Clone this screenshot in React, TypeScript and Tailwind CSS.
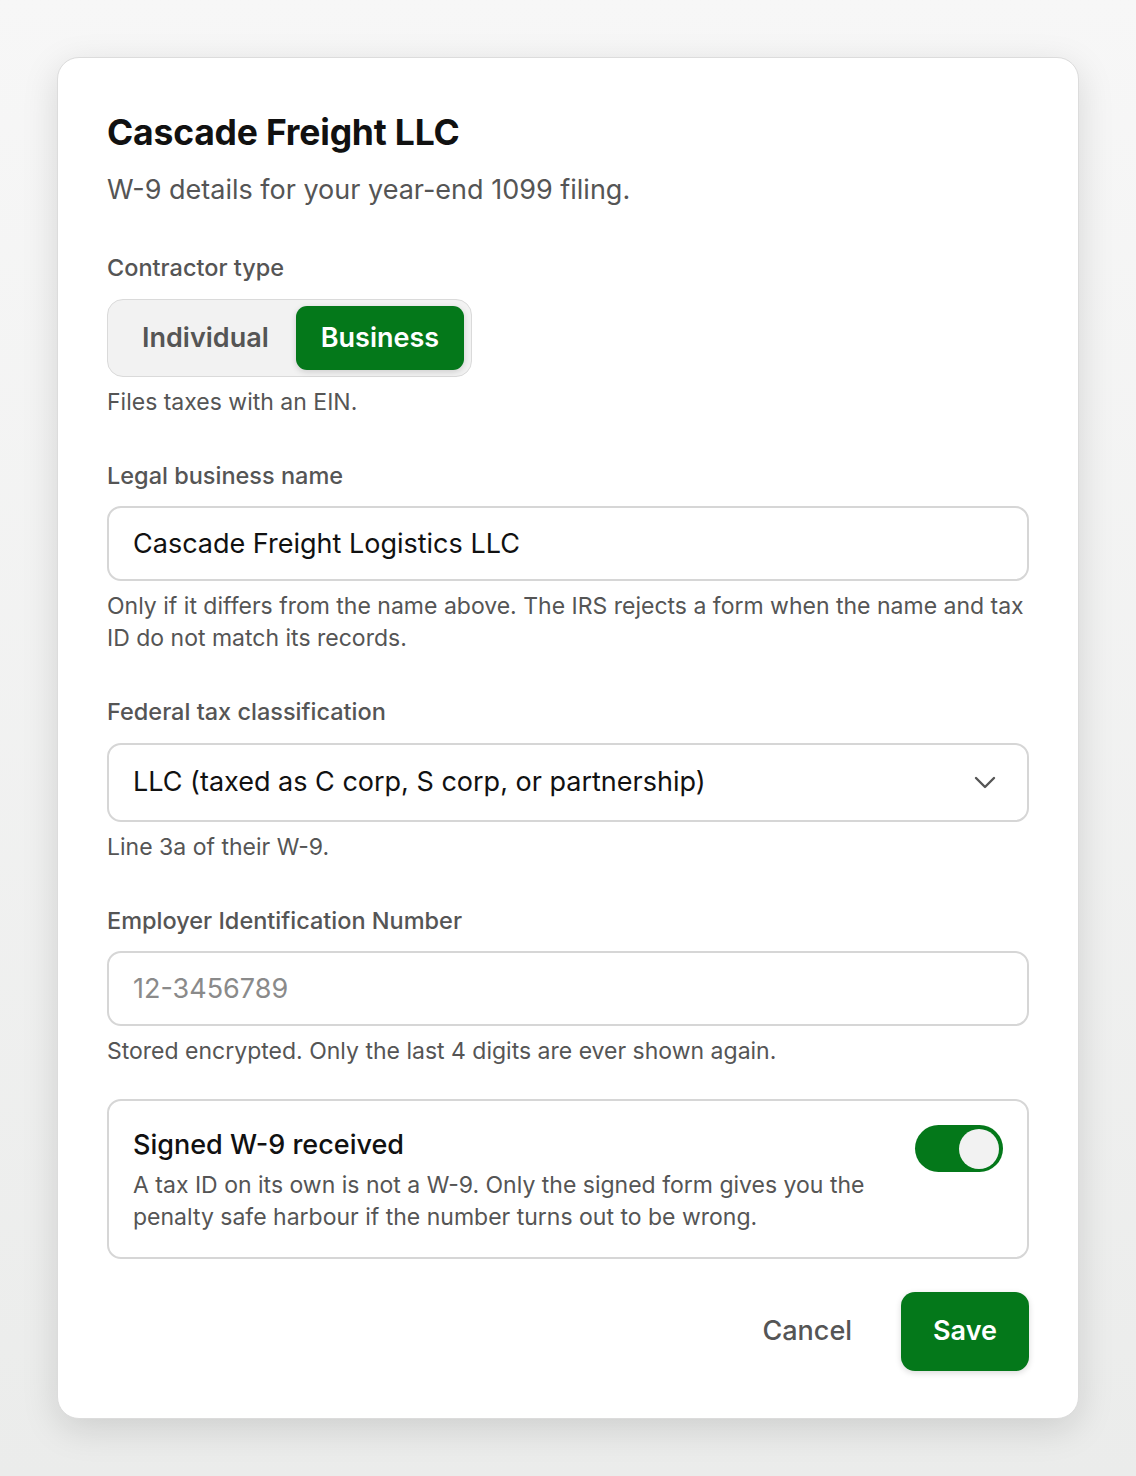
import React, { useState } from 'react';

const font = { fontFamily: 'Inter, "Noto Sans", sans-serif' };

const App: React.FC = () => {
  const [type, setType] = useState<'individual' | 'business'>('business');
  const [received, setReceived] = useState(true);

  return (
    <div
      className="min-h-[1476px] w-full bg-gradient-to-b from-[#f7f7f7] to-[#ebeceb] px-[57px] pt-[57px] pb-[58px]"
      style={font}
    >
      <div className="rounded-[22px] border border-[#dcdcdc] bg-white px-[49px] pt-[53px] pb-[47px] shadow-[0_10px_36px_rgba(0,0,0,0.13)]">
        {/* Header */}
        <h1 className="text-[35.5px] leading-[44px] font-bold tracking-[-0.2px] text-[#111]">
          Cascade Freight LLC
        </h1>
        <p className="mt-[18px] text-[27px] leading-[34px] text-[#555]">
          W-9 details for your year-end 1099 filing.
        </p>

        {/* Contractor type */}
        <label className="mt-[46px] block text-[23.5px] leading-[30px] font-medium text-[#555]">
          Contractor type
        </label>
        <div className="mt-[16px] inline-flex rounded-[16px] border border-[#dadada] bg-[#f2f2f2] px-[7px] py-[6px]">
          <button
            onClick={() => setType('individual')}
            className={`h-[64px] rounded-[11px] px-[27px] text-[27px] font-semibold ${
              type === 'individual' ? 'bg-[#04781a] text-white shadow-[0_2px_6px_rgba(0,0,0,0.15)]' : 'text-[#555]'
            }`}
          >
            Individual
          </button>
          <button
            onClick={() => setType('business')}
            className={`h-[64px] rounded-[11px] px-[25px] text-[27px] font-semibold ${
              type === 'business' ? 'bg-[#04781a] text-white shadow-[0_2px_6px_rgba(0,0,0,0.15)]' : 'text-[#555]'
            }`}
          >
            Business
          </button>
        </div>
        <p className="mt-[10px] text-[23px] leading-[30px] text-[#555]">Files taxes with an EIN.</p>

        {/* Legal business name */}
        <label className="mt-[44px] block text-[23.5px] leading-[30px] font-medium text-[#555]">
          Legal business name
        </label>
        <input
          defaultValue="Cascade Freight Logistics LLC"
          className="mt-[15px] block h-[75px] w-full rounded-[14px] border-2 border-[#d6d6d6] bg-white px-[24px] text-[27px] text-[#111] outline-none"
        />
        <p className="mt-[9px] text-[23px] leading-[32px] text-[#555]">
          Only if it differs from the name above. The IRS rejects a form when the name and tax ID do not match its
          records.
        </p>

        {/* Federal tax classification */}
        <label className="mt-[43px] block text-[23.5px] leading-[30px] font-medium text-[#555]">
          Federal tax classification
        </label>
        <div className="mt-[16px] flex h-[79px] w-full items-center justify-between rounded-[14px] border-2 border-[#d6d6d6] bg-white pl-[24px] pr-[31px]">
          <span className="text-[27px] text-[#111]">LLC (taxed as C corp, S corp, or partnership)</span>
          <svg width="22" height="13" viewBox="0 0 22 13" fill="none">
            <path d="M2 2 L11 11 L20 2" stroke="#555" strokeWidth="2.4" strokeLinecap="round" strokeLinejoin="round" />
          </svg>
        </div>
        <p className="mt-[10px] text-[23px] leading-[30px] text-[#555]">Line 3a of their W-9.</p>

        {/* EIN */}
        <label className="mt-[44px] block text-[23.5px] leading-[30px] font-medium text-[#555]">
          Employer Identification Number
        </label>
        <input
          placeholder="12-3456789"
          className="mt-[15px] block h-[75px] w-full rounded-[14px] border-2 border-[#d6d6d6] bg-white px-[24px] text-[27px] text-[#111] outline-none placeholder:text-[#8a8a8a]"
        />
        <p className="mt-[10px] text-[23px] leading-[30px] text-[#555]">
          Stored encrypted. Only the last 4 digits are ever shown again.
        </p>

        {/* Signed W-9 */}
        <div className="mt-[33px] flex items-start justify-between gap-[24px] rounded-[14px] border-2 border-[#d6d6d6] px-[24px] pt-[27px] pb-[24px]">
          <div>
            <h3 className="text-[27px] leading-[34px] font-medium text-[#111]">Signed W-9 received</h3>
            <p className="mt-[7px] text-[23px] leading-[32px] text-[#555]">
              A tax ID on its own is not a W-9. Only the signed form gives you the penalty safe harbour if the number
              turns out to be wrong.
            </p>
          </div>
          <button
            onClick={() => setReceived(!received)}
            className={`-mt-[3px] flex h-[47px] w-[88px] shrink-0 items-center rounded-full p-[4px] ${
              received ? 'justify-end bg-[#04781a]' : 'justify-start bg-[#d6d6d6]'
            }`}
          >
            <span className="block h-[40px] w-[40px] rounded-full bg-[#f2f2f2]" />
          </button>
        </div>

        {/* Actions */}
        <div className="mt-[33px] flex items-center justify-end gap-[25px]">
          <button className="h-[79px] px-[24px] text-[27px] font-medium text-[#555]">Cancel</button>
          <button className="h-[79px] rounded-[14px] bg-[#04781a] px-[32px] text-[27px] font-semibold text-white shadow-[0_2px_6px_rgba(0,0,0,0.15)]">
            Save
          </button>
        </div>
      </div>
    </div>
  );
};

export default App;
